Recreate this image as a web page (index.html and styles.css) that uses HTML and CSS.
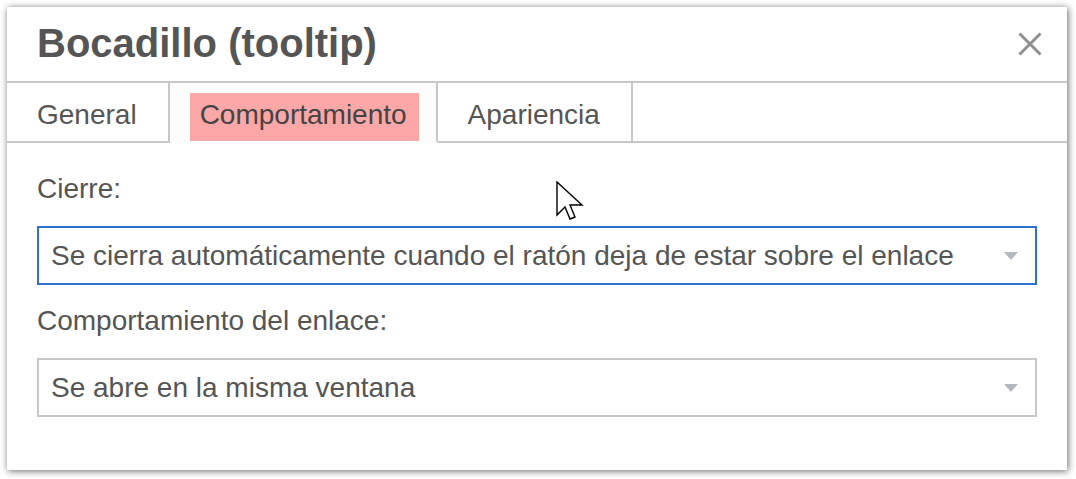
FILE: index.html
```html
<!DOCTYPE html>
<html lang="es">
<head>
<meta charset="utf-8">
<title>Bocadillo (tooltip)</title>
<link rel="stylesheet" href="styles.css">
</head>
<body>
<div class="dialog">
  <div class="header">
    <h1 class="title">Bocadillo (tooltip)</h1>
    <button class="close" aria-label="Cerrar">
      <svg width="24" height="24" viewBox="0 0 24 24"><path d="M1.5 1.5 L22.5 22.5 M22.5 1.5 L1.5 22.5" stroke="#8f8f8f" stroke-width="3" fill="none"/></svg>
    </button>
  </div>
  <div class="tabs">
    <div class="tab">General</div>
    <div class="tab active"><span class="hl">Comportamiento</span></div>
    <div class="tab">Apariencia</div>
    <div class="tab-fill"></div>
  </div>
  <div class="content">
    <div class="label">Cierre:</div>
    <div class="select focused"><span class="value">Se cierra automáticamente cuando el ratón deja de estar sobre el enlace</span><span class="caret"></span></div>
    <div class="label">Comportamiento del enlace:</div>
    <div class="select"><span class="value">Se abre en la misma ventana</span><span class="caret"></span></div>
  </div>
</div>
<svg class="cursor" width="28" height="42" viewBox="0 0 28 42"><path d="M1 1 L1 34 L9 26 L14 38 L19 36 L14 24 L26 24 Z" fill="#fff" stroke="#000" stroke-width="1.4" stroke-linejoin="miter"/></svg>
</body>
</html>
```
FILE: styles.css
```css
html, body {
  margin: 0;
  padding: 0;
  background: #fff;
}
body {
  position: relative;
  width: 1076px;
  height: 479px;
  overflow: hidden;
  font-family: "Liberation Sans", Arial, sans-serif;
  color: #555;
}
.dialog {
  margin: 7px 0 0 7px;
  width: 1060px;
  height: 463px;
  background: #fff;
  box-shadow: 1px 1px 7px rgba(0, 0, 0, 0.6);
  display: flex;
  flex-direction: column;
}
.header {
  height: 74px;
  flex: none;
  border-bottom: 2px solid #c8c8c8;
  display: flex;
  align-items: center;
  justify-content: space-between;
  padding: 0 25px 0 30px;
}
.title {
  margin: 0;
  font-size: 40px;
  font-weight: bold;
  line-height: 44px;
  padding-bottom: 3px;
  color: #555;
}
.close {
  border: 0;
  background: none;
  padding: 0;
  width: 24px;
  height: 24px;
  display: block;
}
.close svg { display: block; }
.tabs {
  display: flex;
  flex: none;
  height: 60px;
}
.tab {
  box-sizing: border-box;
  height: 60px;
  font-size: 28px;
  padding: 6px 31px 0 30px;
  line-height: 52px;
  border-right: 2px solid #c8c8c8;
  border-bottom: 2px solid #c8c8c8;
  color: #555;
  white-space: nowrap;
}
.tab.active {
  background: #fcfcfc;
  border-bottom-color: #fcfcfc;
  padding: 10px 17px 0 20px;
  line-height: 44px;
  display: flex;
  align-items: flex-end;
}
.hl {
  display: block;
  background: #fba7a7;
  color: #444;
  padding: 0 12px 4px 10px;
}
.tab-fill {
  flex: 1;
  border-bottom: 2px solid #c8c8c8;
}
.content {
  padding: 30px 30px 0;
}
.label {
  font-size: 28px;
  line-height: 32px;
  margin-bottom: 21px;
}
.select {
  display: flex;
  align-items: center;
  height: 55px;
  border: 2px solid #c8c8c8;
  padding: 0 17px 0 12px;
  margin-bottom: 20px;
  font-size: 28px;
  line-height: 55px;
}
.select.focused {
  border-color: #2a74cd;
}
.value {
  flex: 1;
  white-space: nowrap;
  color: #555;
}
.caret {
  width: 0;
  height: 0;
  border-left: 7.5px solid transparent;
  border-right: 7.5px solid transparent;
  border-top: 8px solid #b4b9be;
}
.cursor {
  position: absolute;
  left: 556px;
  top: 181px;
}
```
